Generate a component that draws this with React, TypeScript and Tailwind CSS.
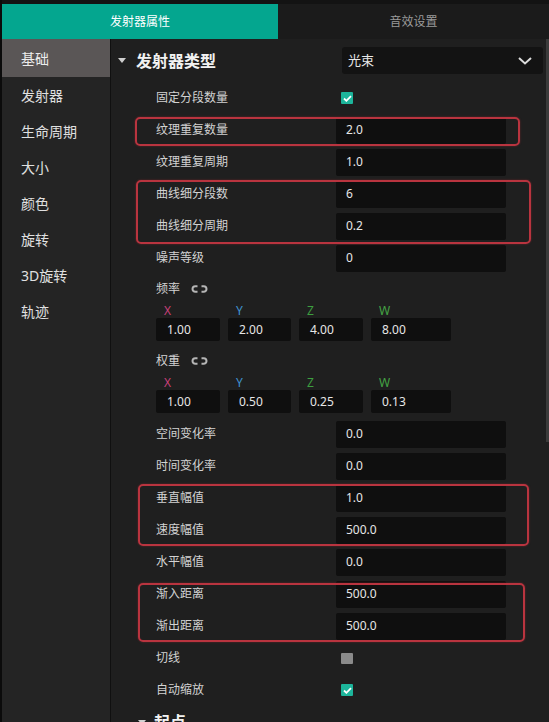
import React from "react";

const Tri = () => (
  <svg width="8" height="5" viewBox="0 0 8 5" className="shrink-0">
    <polygon points="0,0 8,0 4,5" fill="#cfcfcf" />
  </svg>
);

const Check = ({ on }: { on: boolean }) =>
  on ? (
    <div className="w-[12px] h-[12px] bg-[#1db59b] rounded-[1px] flex items-center justify-center ml-[5px]">
      <svg width="9" height="7" viewBox="0 0 9 7">
        <polyline points="1,3.5 3.4,5.8 8,1.2" fill="none" stroke="#ffffff" strokeWidth="1.8" />
      </svg>
    </div>
  ) : (
    <div className="w-[12px] h-[11px] bg-[#8a8a8a] rounded-[1px] ml-[5px]" />
  );

const Row = ({ label, value }: { label: string; value: string }) => (
  <div className="flex items-center h-[32px] shrink-0 pl-[45px]">
    <div className="w-[180px] text-[12px] text-[#d2d2d2]">{label}</div>
    <div className="w-[170px] h-[27px] bg-[#0f0f0f] rounded-[2px] flex items-center pl-[10px] text-[12px] text-[#e6e6e6]">
      {value}
    </div>
  </div>
);

const CheckRow = ({ label, on }: { label: string; on: boolean }) => (
  <div className="flex items-center h-[32px] shrink-0 pl-[45px]">
    <div className="w-[180px] text-[12px] text-[#d2d2d2]">{label}</div>
    <Check on={on} />
  </div>
);

const LinkIcon = () => (
  <svg width="17" height="8" viewBox="0 0 17 8" className="ml-[11px]">
    <path d="M6.5 1.2 H4.3 A2.8 2.8 0 0 0 4.3 6.8 H6.5" fill="none" stroke="#b5b5b5" strokeWidth="2" />
    <path d="M10.5 1.2 H12.7 A2.8 2.8 0 0 1 12.7 6.8 H10.5" fill="none" stroke="#b5b5b5" strokeWidth="2" />
  </svg>
);

const axes = [
  { k: "X", c: "text-[#c8407a]", w: "w-[64px]" },
  { k: "Y", c: "text-[#3f93cf]", w: "w-[63px]" },
  { k: "Z", c: "text-[#3d9f3f]", w: "w-[64px]" },
  { k: "W", c: "text-[#44a244]", w: "w-[80px]" },
];

const Vec = ({ label, values, mt }: { label: string; values: string[]; mt: string }) => (
  <div className={`pl-[45px] shrink-0 ${mt}`}>
    <div className="h-[22px] flex items-center text-[12px] text-[#d2d2d2]">
      {label}
      <LinkIcon />
    </div>
    <div className="flex gap-[8px]">
      {axes.map((a, i) => (
        <div key={a.k} className={`flex flex-col ${a.w}`}>
          <div className={`h-[18px] flex items-end pl-[8px] text-[12px] leading-[14px] ${a.c}`}>{a.k}</div>
          <div className="h-[23px] bg-[#0f0f0f] rounded-[2px] flex items-center pl-[11px] text-[12px] text-[#e6e6e6]">
            {values[i]}
          </div>
        </div>
      ))}
    </div>
  </div>
);

const Annot = ({ cls }: { cls: string }) => (
  <div
    className={`absolute border-2 border-solid border-[#b9343f] rounded-[5px] pointer-events-none shadow-[0_0_2px_rgba(200,50,60,0.5)] ${cls}`}
  />
);

export default function App() {
  const side = ["发射器", "生命周期", "大小", "颜色", "旋转", "3D旋转", "轨迹"];
  return (
    <div className="relative w-[549px] h-[722px] overflow-hidden flex bg-[#0b0b0b] [font-family:'Noto_Sans','Noto_Sans_CJK_SC',sans-serif]">
      <div className="w-[2px] shrink-0 bg-[#0b0b0b]" />
      <div className="flex-1 flex flex-col min-h-0">
        <div className="h-[4px] shrink-0 bg-[#131313]" />
        <div className="h-[35px] shrink-0 flex">
          <div className="w-[276px] bg-[#04a68f] flex items-center justify-center text-[12px] text-white">
            发射器属性
          </div>
          <div className="flex-1 bg-[#1b1b1b] flex items-center justify-center text-[12px] text-[#9a9a9a]">
            音效设置
          </div>
        </div>
        <div className="flex-1 min-h-0 overflow-hidden flex">
          <div className="w-[109px] shrink-0 bg-[#242424] border-r border-[#101010]">
            <div className="h-[38px] bg-[#5a5656] flex items-center pl-[19px] text-[14px] text-[#ececec]">基础</div>
            {side.map((s) => (
              <div key={s} className="h-[36px] flex items-center pl-[19px] text-[14px] text-[#e0e0e0]">
                {s}
              </div>
            ))}
          </div>
          <div className="flex-1 flex bg-[#1f1f1f] min-h-0">
            <div className="flex-1 flex flex-col min-h-0">
              <div className="h-[43px] shrink-0 flex items-start pt-[8px]">
                <div className="h-[27px] flex items-center pl-[7px]">
                  <Tri />
                  <span className="ml-[10px] text-[16px] font-bold text-[#f2f2f2]">发射器类型</span>
                </div>
                <div className="ml-auto mr-[3px] w-[201px] h-[27px] bg-[#131313] rounded-[3px] flex items-center justify-between pl-[6px] pr-[11px] text-[13px] text-[#e8e8e8]">
                  光束
                  <svg width="14" height="8" viewBox="0 0 14 8">
                    <polyline points="1,1 7,6.5 13,1" fill="none" stroke="#dcdcdc" strokeWidth="2" />
                  </svg>
                </div>
              </div>
              <CheckRow label="固定分段数量" on={true} />
              <Row label="纹理重复数量" value="2.0" />
              <Row label="纹理重复周期" value="1.0" />
              <Row label="曲线细分段数" value="6" />
              <Row label="曲线细分周期" value="0.2" />
              <Row label="噪声等级" value="0" />
              <Vec label="频率" values={["1.00", "2.00", "4.00", "8.00"]} mt="mt-[4px]" />
              <Vec label="权重" values={["1.00", "0.50", "0.25", "0.13"]} mt="mt-[9px]" />
              <div className="h-[5px] shrink-0" />
              <Row label="空间变化率" value="0.0" />
              <Row label="时间变化率" value="0.0" />
              <Row label="垂直幅值" value="1.0" />
              <Row label="速度幅值" value="500.0" />
              <Row label="水平幅值" value="0.0" />
              <Row label="渐入距离" value="500.0" />
              <Row label="渐出距离" value="500.0" />
              <CheckRow label="切线" on={false} />
              <CheckRow label="自动缩放" on={true} />
              <div className="h-[32px] shrink-0 flex items-center pl-[27px]">
                <Tri />
                <span className="ml-[8px] text-[16px] font-bold text-[#f2f2f2]">起点</span>
              </div>
            </div>
            <div className="w-[3px] shrink-0">
              <div className="h-[403px] bg-[#3b3b3b]" />
            </div>
          </div>
        </div>
      </div>
      <Annot cls="left-[135px] top-[117px] w-[385px] h-[29px]" />
      <Annot cls="left-[136px] top-[180px] w-[395px] h-[64px]" />
      <Annot cls="left-[138px] top-[484px] w-[391px] h-[62px]" />
      <Annot cls="left-[138px] top-[583px] w-[387px] h-[59px]" />
    </div>
  );
}
